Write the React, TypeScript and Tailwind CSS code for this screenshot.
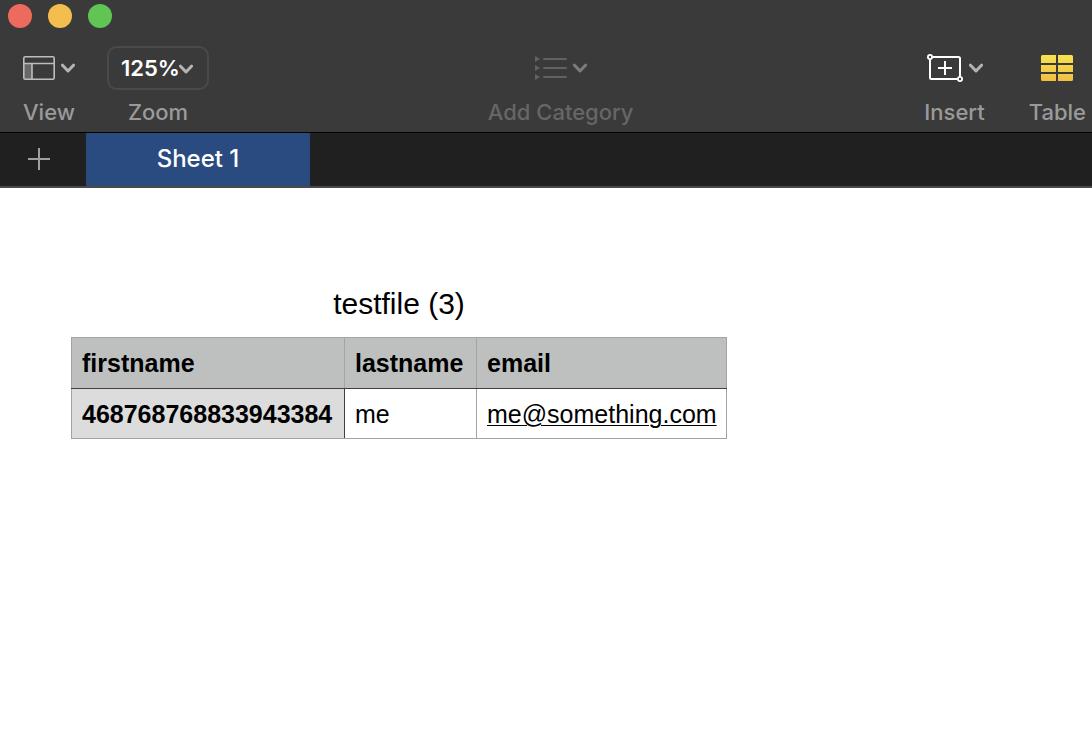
import React, { type FC, type PropsWithChildren } from 'react';

interface ChevronProps {
  className?: string;
}

const Chevron: FC<ChevronProps> = ({ className = 'text-[#b4b4b4]' }) => (
  <svg width="14" height="10" viewBox="0 0 14 10" fill="none" stroke="currentColor" strokeWidth="3" strokeLinecap="round" strokeLinejoin="round" className={className} aria-hidden="true">
    <path d="M1.5 2.2L7 8L12.5 2.2" />
  </svg>
);

const ViewIcon: FC = () => (
  <svg width="32" height="24" viewBox="0 0 32 24" fill="none" className="text-[#bdbdbd]" aria-hidden="true">
    <rect x="1" y="8" width="8" height="15" fill="#686868" />
    <rect x="0.8" y="0.8" width="30.4" height="22.4" rx="1.5" stroke="currentColor" strokeWidth="1.6" />
    <path d="M1 7.5H31M9 7.5V23" stroke="currentColor" strokeWidth="1.6" />
  </svg>
);

const CategoryIcon: FC = () => (
  <svg width="32" height="26" viewBox="0 0 32 26" fill="none" className="text-[#626262]" aria-hidden="true">
    <path d="M0 1L5 4L0 7ZM0 10L5 13L0 16ZM0 19L5 22L0 25Z" fill="currentColor" />
    <path d="M9 4H31M9 13H31M9 22H31" stroke="currentColor" strokeWidth="2" strokeLinecap="round" />
  </svg>
);

const InsertIcon: FC = () => (
  <svg width="36" height="28" viewBox="0 0 36 28" fill="none" stroke="#fff" aria-hidden="true">
    <path d="M5.5 3H31.5Q33 3 33 4.5V22.5M30 25H4.5Q3 25 3 23.5V5.5" strokeWidth="2" />
    <circle cx="3" cy="3" r="2.1" strokeWidth="1.8" />
    <circle cx="33" cy="25" r="2.1" strokeWidth="1.8" />
    <path d="M18 7V21M11 14H25" strokeWidth="2" />
  </svg>
);

const TableIcon: FC = () => (
  <svg width="32" height="26" viewBox="0 0 32 26" aria-hidden="true">
    <defs>
      <linearGradient id="tableFill" x1="0" y1="0" x2="0" y2="26" gradientUnits="userSpaceOnUse">
        <stop offset="0" stopColor="#f9e34f" />
        <stop offset="1" stopColor="#f0bf42" />
      </linearGradient>
    </defs>
    <path
      fill="url(#tableFill)"
      d="M1.5 0H15V8H0V1.5Q0 0 1.5 0ZM17 0H30.5Q32 0 32 1.5V8H17ZM0 10H15V17H0ZM17 10H32V17H17ZM0 19H15V26H1.5Q0 26 0 24.5ZM17 19H32V24.5Q32 26 30.5 26H17Z"
    />
  </svg>
);

interface ToolbarButtonProps extends PropsWithChildren {
  label: string;
  disabled?: boolean;
}

const ToolbarButton: FC<ToolbarButtonProps> = ({ label, disabled = false, children }) => (
  <button type="button" disabled={disabled} className="flex flex-col items-center gap-2.5 text-[#9a9a9a] disabled:text-[#666666]">
    <span className="flex h-11 items-center gap-1.5">{children}</span>
    <span className="whitespace-nowrap text-[22px] leading-6 font-medium">{label}</span>
  </button>
);

const WindowControls: FC = () => (
  <div className="flex gap-4 px-2 pt-1">
    <button type="button" aria-label="Close" className="size-6 rounded-full bg-[#ed6a5e]" />
    <button type="button" aria-label="Minimize" className="size-6 rounded-full bg-[#f4be4f]" />
    <button type="button" aria-label="Full screen" className="size-6 rounded-full bg-[#61c554]" />
  </div>
);

const Toolbar: FC = () => (
  <div className="flex items-start justify-between pt-[18px] pr-1.5 pb-2 pl-[23px]">
    <div className="flex gap-8">
      <ToolbarButton label="View">
        <ViewIcon />
        <Chevron />
      </ToolbarButton>
      <div className="flex flex-col items-center gap-2.5">
        <div className="relative">
          <select
            id="zoom"
            defaultValue="125"
            className="block h-11 w-[102px] appearance-none rounded-[10px] border-2 border-[#4a4a4a] bg-transparent pl-3 text-[22px] font-semibold text-white"
          >
            <option value="100">100%</option>
            <option value="125">125%</option>
            <option value="150">150%</option>
          </select>
          <Chevron className="pointer-events-none absolute top-[18px] right-4 text-[#b4b4b4]" />
        </div>
        <label htmlFor="zoom" className="text-[22px] leading-6 font-medium text-[#9a9a9a]">Zoom</label>
      </div>
    </div>

    <div className="mr-3">
      <ToolbarButton label="Add Category" disabled>
        <CategoryIcon />
        <Chevron className="text-[#7c7c7c]" />
      </ToolbarButton>
    </div>

    <div className="flex gap-11">
      <ToolbarButton label="Insert">
        <InsertIcon />
        <Chevron />
      </ToolbarButton>
      <ToolbarButton label="Table">
        <TableIcon />
      </ToolbarButton>
    </div>
  </div>
);

const SheetTabs: FC = () => (
  <nav className="flex h-14 border-t border-b-2 border-t-black border-b-[#4b4949] bg-[#202020]">
    <button type="button" aria-label="Add sheet" className="flex w-[86px] items-center pb-0.5 pl-7 text-[#a0a0a0]">
      <svg width="22" height="22" viewBox="0 0 22 22" stroke="currentColor" strokeWidth="2" aria-hidden="true">
        <path d="M11 0V22M0 11H22" />
      </svg>
    </button>
    <button type="button" className="w-56 bg-[#2a4b80] pb-0.5 text-2xl font-medium text-white">Sheet 1</button>
  </nav>
);

const SheetTable: FC = () => (
  <table className="w-[656px] table-fixed border-collapse border border-[#a3a3a3] text-left text-[25px] leading-[30px]">
    <caption className="pb-[13px] text-[30px] leading-10">testfile (3)</caption>
    <colgroup>
      <col className="w-[273px]" />
      <col className="w-[132px]" />
      <col />
    </colgroup>
    <thead>
      <tr className="h-[51px] bg-[#bec0bf]">
        <th scope="col" className="border border-[#a3a3a3] border-b-[#3f3f3f] px-2.5 font-bold">firstname</th>
        <th scope="col" className="border border-[#a3a3a3] border-b-[#3f3f3f] px-2.5 font-bold">lastname</th>
        <th scope="col" className="border border-[#a3a3a3] border-b-[#3f3f3f] px-2.5 font-bold">email</th>
      </tr>
    </thead>
    <tbody>
      <tr className="h-[50px]">
        <th scope="row" className="border border-[#a3a3a3] border-r-[#3f3f3f] bg-[#dcdcdc] px-2.5 font-bold">468768768833943384</th>
        <td className="border border-[#a3a3a3] px-2.5">me</td>
        <td className="border border-[#a3a3a3] px-2.5">
          <a href="mailto:me@something.com" className="underline decoration-1 underline-offset-2">me@something.com</a>
        </td>
      </tr>
    </tbody>
  </table>
);

const App: FC = () => {
  return (
    <div className="min-h-screen bg-white font-['Inter',sans-serif]">
      <header className="bg-[#3a3a3a]">
        <WindowControls />
        <Toolbar />
        <SheetTabs />
      </header>
      <main className="px-[71px] pt-24 font-['Liberation_Sans',Arial,sans-serif] text-black">
        <SheetTable />
      </main>
    </div>
  );
};

export default App;
